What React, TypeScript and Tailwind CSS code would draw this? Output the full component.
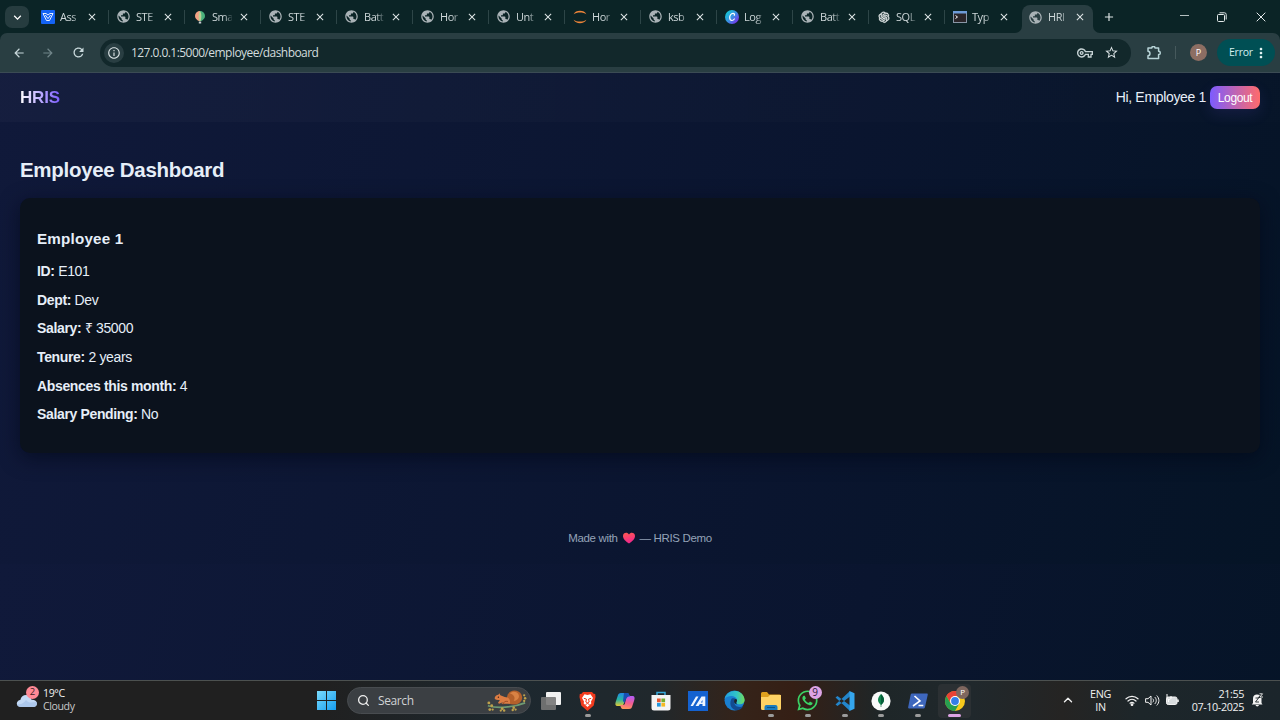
import type { ReactNode } from "react";
import {
  MdPublic,
  MdClose,
  MdArrowBack,
  MdArrowForward,
  MdRefresh,
  MdInfoOutline,
  MdOutlineVpnKey,
  MdStarBorder,
  MdMoreVert,
  MdAdd,
  MdKeyboardArrowDown,
} from "react-icons/md";
import { AiOutlineOpenAI } from "react-icons/ai";
import { FaWhatsapp } from "react-icons/fa";
import { ChevronUp, Search } from "lucide-react";

const Globe = () => <MdPublic className="size-[15px] text-[#a9b2b6]" />;

const ArrowBadge = () => (
  <svg width="14" height="14" viewBox="0 0 14 14">
    <rect width="14" height="14" rx="1" fill="#1463f5" />
    <path d="M2 3.500h3L7 5l2-1.500h3L8.500 10.500H5.500zM4.300 5L7 8.600 9.700 5" fill="none" stroke="#fff" strokeWidth="0.900" />
  </svg>
);
const Balloon = () => (
  <svg width="14" height="14" viewBox="0 0 14 14">
    <path d="M7 1A5 5 0 0 0 2 6c0 2.500 2 4 3.800 5H7z" fill="#f2a184" />
    <path d="M7 1a5 5 0 0 1 5 5c0 2.500-2 4-3.800 5H7z" fill="#49b07b" />
    <path d="M7 1c-1.700 2-1.700 7-.6 10h1.200C8.700 8 8.700 3 7 1z" fill="#b9cf94" />
    <rect x="5.800" y="11.500" width="2.400" height="2" fill="#c7cdd0" />
  </svg>
);
const Jupyter = () => (
  <svg width="14" height="14" viewBox="0 0 14 14">
    <path d="M.6 4.300C2.500-.3 11.500-.3 13.400 4.300 10.300 1.800 3.700 1.800.6 4.300zM.6 9.700c1.900 4.600 10.900 4.600 12.800 0-3.100 2.500-9.700 2.500-12.800 0z" fill="#ee8439" />
  </svg>
);
const Canva = () => (
  <svg width="14" height="14" viewBox="0 0 14 14">
    <defs>
      <linearGradient id="canva" x1="0" y1="0.300" x2="0.800" y2="1">
        <stop offset="0" stopColor="#15c4d4" />
        <stop offset="0.500" stopColor="#3b8de4" />
        <stop offset="1" stopColor="#7b2bea" />
      </linearGradient>
    </defs>
    <circle cx="7" cy="7" r="7" fill="url(#canva)" />
    <path d="M9.300 5.300c.5-1-.1-2-1.300-2C6 3.300 4.600 5.600 4.700 7.800c.1 1.800 1 2.700 2.200 2.700 1 0 1.800-.6 2.400-1.500" fill="none" stroke="#fff" strokeWidth="1.200" strokeLinecap="round" />
  </svg>
);
const TerminalIcon = () => (
  <svg width="14" height="12" viewBox="0 0 14 12">
    <rect x="0.500" y="0.500" width="13" height="11" fill="#2a2529" stroke="#8996a6" />
    <rect width="14" height="2.500" fill="#6d9bd8" />
    <path d="M2.500 4.500l2 1.500-2 1.500" fill="none" stroke="#fff" strokeWidth="1" />
  </svg>
);

const tabs: { title: string; icon: ReactNode }[] = [
  { title: "Ass", icon: <ArrowBadge /> },
  { title: "STE", icon: <Globe /> },
  { title: "Sma", icon: <Balloon /> },
  { title: "STE", icon: <Globe /> },
  { title: "Batt", icon: <Globe /> },
  { title: "Hor", icon: <Globe /> },
  { title: "Unt", icon: <Globe /> },
  { title: "Hor", icon: <Jupyter /> },
  { title: "ksb", icon: <Globe /> },
  { title: "Log", icon: <Canva /> },
  { title: "Batt", icon: <Globe /> },
  { title: "SQL", icon: <AiOutlineOpenAI className="size-[14px] text-[#e8eced]" strokeWidth={25} /> },
  { title: "Typ", icon: <TerminalIcon /> },
];

function TabBody({ title, icon }: { title: string; icon: ReactNode }) {
  return (
    <>
      <span className="flex w-[15px] shrink-0 items-center justify-center">{icon}</span>
      <span className="ml-[5px] w-[20px] shrink-0 pt-px text-[11px] tracking-[-0.45px] whitespace-nowrap text-[#cfd8da] [mask-image:linear-gradient(90deg,#000_60%,rgba(0,0,0,0.15))]">
        {title}
      </span>
      <MdClose className="ml-[6px] size-[12px] shrink-0 text-[#dfe5e6]" />
    </>
  );
}

function TabStrip() {
  return (
    <div className="flex h-[33px] bg-[#0b2426]">
      <div className="mt-[6px] ml-[5px] flex h-[22px] w-[24px] items-center justify-center rounded-[7px] bg-[#263c3f]">
        <MdKeyboardArrowDown className="size-[15px] text-white" />
      </div>
      <div className="ml-[3px] flex">
        {tabs.map((t, i) => (
          <div key={i} className="flex h-[33px] w-[76px] items-center pl-[8px]">
            <TabBody {...t} />
            <span
              className={
                i === tabs.length - 1
                  ? "hidden"
                  : "-mr-px ml-auto h-[14px] w-px bg-[#2d4547]"
              }
            />
          </div>
        ))}
      </div>
      <div className="relative mt-[5px] ml-[2px] flex h-[28px] w-[71px] items-center rounded-t-[8px] bg-[#293e42] pb-[4px] pl-[6px]">
        <svg className="absolute bottom-0 -left-[7px]" width="7" height="7"><path d="M7 0v7H0a7 7 0 0 0 7-7z" fill="#293e42" /></svg>
        <svg className="absolute -right-[7px] bottom-0" width="7" height="7"><path d="M0 0v7h7a7 7 0 0 1-7-7z" fill="#293e42" /></svg>
        <TabBody title="HRI" icon={<Globe />} />
      </div>
      <div className="flex h-[33px] w-[32px] items-center justify-center">
        <MdAdd className="size-[14px] text-[#dfe5e6]" />
      </div>
      <div className="ml-auto flex h-[33px] items-center pr-[14px] text-[#e4eaeb]">
        <svg width="9" height="10" viewBox="0 0 9 10"><path d="M0 3.500h9" stroke="#b5c0c1" /></svg>
        <svg className="ml-[28px]" width="10" height="10" viewBox="0 0 10 10" fill="none" stroke="currentColor">
          <rect x="0.500" y="2.500" width="7" height="7" rx="1" />
          <path d="M2.500.8H7.500Q9.200.8 9.200 2.500V7.500" />
        </svg>
        <svg className="ml-[29px]" width="10" height="10" viewBox="0 0 10 10" stroke="currentColor" strokeWidth="1">
          <path d="M.7.7l8.600 8.600M9.300.7L.7 9.300" />
        </svg>
      </div>
    </div>
  );
}

function Toolbar() {
  return (
    <div className="bg-[#0b2426]">
      <div className="flex h-[40px] items-center rounded-t-[7px] border-b border-[#3b4b54] bg-[#293e42]">
        <MdArrowBack className="ml-[12px] size-[14px] text-[#c8d8db]" />
        <MdArrowForward className="ml-[15px] size-[14px] text-[#71868a]" />
        <MdRefresh className="ml-[16px] size-[15px] text-[#c8d8db]" />
        <div className="ml-[14px] flex h-[28px] w-[1031px] items-center rounded-full bg-[#12282b]">
          <span className="ml-[4px] flex size-[20px] items-center justify-center rounded-full bg-[#293e42]">
            <MdInfoOutline className="size-[14px] text-[#d9e2e4]" />
          </span>
          <span className="ml-[7px] pt-px text-[12px] tracking-[-0.55px] text-[#d3dcdd]">127.0.0.1:5000/employee/dashboard</span>
          <MdOutlineVpnKey className="ml-auto size-[16px] text-[#c5d2d4]" />
          <MdStarBorder className="mr-[12px] ml-[11px] size-[15px] text-[#d9e2e4]" />
        </div>
        <svg className="ml-[16px]" width="16" height="14" viewBox="0 0 16 14">
          <path d="M1 2h3.800a1.600 1.600 0 0 1 3.200 0h3.600v3.300c2.300 0 2.300 3.300 0 3.300v4H1V9.700c2.600-.2 2.600-4.300 0-4.500z" fill="none" stroke="#b7d3d7" strokeWidth="1.500" strokeLinejoin="round" />
        </svg>
        <span className="ml-[12px] h-[13px] w-px bg-[#46595c]" />
        <span className="ml-[14px] flex size-[17px] items-center justify-center rounded-full bg-[#8d6e63] text-[9px] text-white">P</span>
        <div className="ml-[10px] flex h-[27px] w-[58px] items-center rounded-full bg-[#004f54] pl-[12px]">
          <span className="text-[10.5px] tracking-[-0.25px] text-[#d5f0f1]">Error</span>
          <MdMoreVert className="size-[16px] shrink-0 text-[#e6f6f6]" />
        </div>
      </div>
    </div>
  );
}

const details = [
  ["ID:", "E101"],
  ["Dept:", "Dev"],
  ["Salary:", "₹ 35000"],
  ["Tenure:", "2 years"],
  ["Absences this month:", "4"],
  ["Salary Pending:", "No"],
];

function Dashboard() {
  return (
    <div className="flex h-[607px] flex-col bg-[linear-gradient(105deg,#10193a_0%,#0a152f_62%,#051426_100%)] bg-[length:1280px_491px] font-['Liberation_Sans',sans-serif] text-[#e6eef8]">
      <header className="flex h-[49px] items-center justify-between bg-[linear-gradient(90deg,rgba(255,255,255,0.025),rgba(255,255,255,0.003))] px-[20px]">
        <span className="bg-[linear-gradient(90deg,#ffffff,#7c5cff)] bg-clip-text pt-px text-[17px] font-bold tracking-[-0.2px] text-transparent">HRIS</span>
        <div className="flex items-center gap-[4px]">
          <span className="text-[14px] tracking-[-0.33px]">Hi, Employee 1</span>
          <button className="flex h-[23px] w-[50px] items-center justify-center rounded-[7px] bg-[linear-gradient(90deg,#7c5cff,#ff6b6b)] pt-px text-[12px] tracking-[-0.4px] text-white shadow-[0_5px_15px_rgba(124,92,255,0.12)]">
            Logout
          </button>
        </div>
      </header>
      <main className="px-[20px] pt-[36px]">
        <h1 className="text-[20.5px] leading-[23px] font-bold tracking-[-0.3px]">Employee Dashboard</h1>
        <section className="mt-[17px] h-[255px] rounded-[10px] bg-[#0b121d] px-[17px] pt-[32px] shadow-[0_5px_20px_rgba(2,6,23,0.6)]">
          <h3 className="text-[15.2px] leading-[18px] font-bold tracking-[0.2px]">Employee 1</h3>
          <div className="mt-[16px] flex flex-col gap-[13.330px]">
            {details.map(([label, value]) => (
              <p key={label} className="text-[14px] leading-[15.360px] tracking-[-0.35px]">
                <strong>{label}</strong> {value}
              </p>
            ))}
          </div>
        </section>
      </main>
      <footer className="mt-[78px] flex items-center justify-center text-[11.5px] leading-[14px] tracking-[-0.35px] text-[#94a3b8]">
        <span>Made with</span>
        <svg className="mx-[5px]" width="12" height="12" viewBox="0 0 12 12">
          <defs>
            <linearGradient id="heart" x1="0" y1="0" x2="0.300" y2="1">
              <stop offset="0" stopColor="#ff5a50" />
              <stop offset="1" stopColor="#f0288c" />
            </linearGradient>
          </defs>
          <path d="M6 11.600C3 9.500 0 7 0 4 0 .6 4.300-.3 6 2.400 7.700-.3 12 .6 12 4c0 3-3 5.500-6 7.600z" fill="url(#heart)" />
        </svg>
        <span>— HRIS Demo</span>
      </footer>
    </div>
  );
}

function TaskItem({ children, dot = false }: { children: ReactNode; dot?: boolean }) {
  return (
    <div className="relative flex h-[38px] w-[36.660px] items-center justify-center">
      {children}
      {dot && <span className="absolute bottom-[3px] h-[3px] w-[6px] rounded-full bg-[#9b9b9b]" />}
    </div>
  );
}

const Squirrel = () => (
  <svg width="42" height="24" viewBox="0 0 44 24">
    <path d="M2 17c10 3 26 2 39-3" stroke="#6f9a72" strokeWidth="1.800" fill="none" />
    <path d="M24 15c-2-3-3-6-1-10 2-4 7-5 11-3 5 3 5 9 1 12-3 2-7 2-11 1z" fill="#b4602b" />
    <path d="M25 4c3-3 8-2 9 1 2 4-2 7-5 7 2-3 1-6-4-8z" fill="#d98244" />
    <path d="M9 9c.5-2 2-3.500 4-3.500l1-1.500 1 2C18 7 19 8 21 8c3 0 5 3 4 7h-9l2-2-4 2-1.500-1 2-3c-3 0-5-.5-5.500-2z" fill="#dc7c43" />
    <path d="M18 15.500c0-2 2-4 5-3" stroke="#9b4723" strokeWidth="0.900" fill="none" />
    <circle cx="13" cy="8" r="0.700" fill="#251a18" />
    <g fill="#bda14c">
      <circle cx="3" cy="14" r="1.500" /><circle cx="6" cy="17" r="1.500" /><circle cx="4" cy="21" r="1.500" /><circle cx="7" cy="21" r="1.200" />
      <circle cx="17" cy="20" r="1.500" /><circle cx="19" cy="22" r="1.300" /><circle cx="15.500" cy="22" r="1.200" />
      <circle cx="29" cy="19" r="1.400" /><circle cx="28" cy="21.500" r="1.300" /><circle cx="31" cy="21" r="1.200" />
      <circle cx="40" cy="6" r="1.200" /><circle cx="41" cy="9" r="1.300" /><circle cx="40" cy="12" r="1.200" />
    </g>
  </svg>
);

function TaskIcons() {
  return (
    <>
      <TaskItem>
        <svg width="20" height="18" viewBox="0 0 20 18">
          <rect x="5" y="0" width="15" height="13" rx="1" fill="#f1f1f1" />
          <rect x="0" y="5" width="15" height="13" rx="1" fill="#777777" fillOpacity="0.900" />
        </svg>
      </TaskItem>
      <TaskItem dot>
        <svg width="17" height="20" viewBox="0 0 17 20">
          <path d="M4 1h9l1.500 1.700 1.700.3.300 3-1.800 8.500L8.500 20l-6.200-5.500L.5 6l.3-3 1.700-.3z" fill="#f23b1e" />
          <path d="M8.500 4l3-.7L14 7l-2 3.500.3 2-3.800 3.500-3.800-3.500.3-2L3 7l2.500-3.700z" fill="#fff" />
          <path d="M4.800 7.300l2.500.7M12.200 7.300l-2.500.7M7.500 8l-.7 3 1.700.8 1.700-.8-.7-3M6.500 13.500l2-1 2 1" stroke="#f23b1e" fill="none" />
        </svg>
      </TaskItem>
      <TaskItem>
        <svg width="20" height="18" viewBox="0 0 20 18">
          <defs>
            <linearGradient id="copA" x1="0" y1="0" x2="0" y2="1"><stop offset="0" stopColor="#2189e8" /><stop offset="0.500" stopColor="#27b5a2" /><stop offset="1" stopColor="#e6c934" /></linearGradient>
            <linearGradient id="copB" x1="0.500" y1="0" x2="0.300" y2="1"><stop offset="0" stopColor="#b75cf0" /><stop offset="0.500" stopColor="#f15d93" /><stop offset="1" stopColor="#ff9a57" /></linearGradient>
          </defs>
          <path d="M6 1h6c2 0 2 2 3 4h-3c-1 0-2 1-2 2l-1 4c-1 3-2 3-4 3H3c-3 0-3-2-2-5l2-6c.5-1 1-2 3-2z" fill="url(#copA)" />
          <path d="M14 17H8c-2 0-2-2-3-4h3c1 0 2-1 2-2l1-4c1-3 2-3 4-3h2c3 0 3 2 2 5l-2 6c-.5 1-1 2-3 2z" fill="url(#copB)" />
          <path d="M9 1h3c2 0 2 2 3 3.500-2 0-3 .5-4 2.500l-1.500 4L8 9z" fill="#174fb5" />
        </svg>
      </TaskItem>
      <TaskItem>
        <svg width="20" height="20" viewBox="0 0 20 20">
          <path d="M6 5V1.500h8V5" stroke="#38a9da" strokeWidth="1.500" fill="none" />
          <path d="M.5 4h19v13a2.500 2.500 0 0 1-2.500 2.500H3A2.500 2.500 0 0 1 .5 17z" fill="#f4f4f4" />
          <path d="M6 7.500h3.700v3.700H6z" fill="#e8552e" /><path d="M10.400 7.500h3.700v3.700h-3.700z" fill="#74ad2e" />
          <path d="M6 11.900h3.700v3.700H6z" fill="#2297dd" /><path d="M10.400 11.900h3.700v3.700h-3.700z" fill="#f5b922" />
        </svg>
      </TaskItem>
      <TaskItem>
        <svg width="20" height="20" viewBox="0 0 20 20">
          <rect width="20" height="20" fill="#1462d0" />
          <path d="M2.500 15L8 5.500h2.500L5 15zM7.500 15l6-9.500h3.800V15H14.500V9l-4 6zM12 11.500h4v1.500h-5z" fill="#eef5ff" />
        </svg>
      </TaskItem>
      <TaskItem>
        <svg width="21" height="21" viewBox="0 0 21 21">
          <defs>
            <linearGradient id="edge" x1="0" y1="0.500" x2="1" y2="0.500"><stop offset="0" stopColor="#219de0" /><stop offset="0.600" stopColor="#31c5c7" /><stop offset="1" stopColor="#72dc59" /></linearGradient>
          </defs>
          <circle cx="10.500" cy="10.500" r="10" fill="#1a7fd0" />
          <path d="M.5 9C2-.5 18-2.500 20.500 9c.7 4-3 6-7 5-2-.5-1-1.500-.5-3C13.500 6 5 4 .5 9z" fill="url(#edge)" />
          <path d="M7 10c-2 5 1 10 6 10.300 3-.3 5-2 6.500-4.300-4 2-10 1-9-5 0-1.500 1-2 1-2S8 7 7 10z" fill="#124b91" />
          <path d="M10.300 10c1-2 3.200-1 2.700 1-.5 1.500-1.500 2.500.5 3.200-2 0-4-1.200-3.200-4.200z" fill="#1b242b" />
        </svg>
      </TaskItem>
      <TaskItem dot>
        <svg width="20" height="18" viewBox="0 0 20 18">
          <path d="M0 1.500A1.500 1.500 0 0 1 1.500 0H6l2 2.500h10.500A1.500 1.500 0 0 1 20 4v12H0z" fill="#dfa01d" />
          <path d="M0 5h7l2-2h11v13.500a1.500 1.500 0 0 1-1.500 1.500h-17A1.500 1.500 0 0 1 0 16.500z" fill="#ffd264" />
          <path d="M3.500 18v-3A2 2 0 0 1 5.500 13h9a2 2 0 0 1 2 2v3z" fill="#1c7bbd" />
          <path d="M6 15.500h8" stroke="#0b5489" />
        </svg>
      </TaskItem>
      <TaskItem dot>
        <FaWhatsapp className="size-[23px] text-[#3bd366]" />
        <span className="absolute top-[4px] left-[19px] flex size-[13px] items-center justify-center rounded-full bg-[#dda4e5] text-[10px] leading-none text-[#30203a]">9</span>
      </TaskItem>
      <TaskItem dot>
        <svg width="20" height="20" viewBox="0 0 20 20">
          <path d="M.5 6.500L2.500 5 15 14.500V20zM.5 13.500L2.500 15 15 5.500V0z" fill="#2385ca" />
          <path d="M14.500 0L19.500 2.300v15.400L14.500 20z" fill="#35a6ed" />
        </svg>
      </TaskItem>
      <TaskItem dot>
        <svg width="20" height="20" viewBox="0 0 20 20">
          <circle cx="10" cy="10" r="9.600" fill="#fafafa" />
          <path d="M10 3c-4 4-4 8 0 11 4-3 4-7 0-11z" fill="#11844d" />
          <path d="M10 3c4 4 4 8 0 11zM9.700 13h.6v3h-.6z" fill="#075d3a" />
        </svg>
      </TaskItem>
      <TaskItem dot>
        <svg width="20" height="16" viewBox="0 0 20 16">
          <path d="M4 .5h14.500c1 0 1.500.5 1.200 1.400L17 14c-.3 1-.8 1.500-1.800 1.500H1c-.8 0-1-.6-.8-1.400L2.600 2C2.800 1 3.300.5 4 .5z" fill="#3e67bd" />
          <path d="M6.500 3l5.500 5-7 5M10.500 12.500h4.800" fill="none" stroke="#fff" strokeWidth="1.600" />
        </svg>
      </TaskItem>
      <div className="relative ml-[2px] flex h-[34px] w-[33px] items-center justify-center rounded-[4px] bg-[#2b3033]">
        <svg width="20" height="20" viewBox="0 0 20 20">
          <circle cx="10" cy="10" r="10" fill="#f8c91c" />
          <path d="M1.340 5A10 10 0 0 1 18.660 5H10L5.700 12.500z" fill="#e94235" />
          <path d="M1.340 5A10 10 0 0 0 10 20l4.300-7.500H5.700z" fill="#279e50" />
          <circle cx="10" cy="10" r="5" fill="#fff" />
          <circle cx="10" cy="10" r="3.900" fill="#347de8" />
        </svg>
        <span className="absolute top-[2px] left-[18px] flex size-[13px] items-center justify-center rounded-full bg-[#7f675f] text-[8px] leading-none text-white">P</span>
        <span className="absolute bottom-px h-[3px] w-[13px] rounded-full bg-[#dda4e5]" />
      </div>
    </>
  );
}

function Taskbar() {
  return (
    <div className="flex h-[40px] items-center border-t border-[#4c5150] bg-[linear-gradient(90deg,#202020_0%,#202020_25%,#1d282f_40%,#20282c_51%,#352319_58%,#351f15_62%,#1e2628_69%,#20282c_76%,#252423_83%,#1d262a_89%,#1b252b_100%)] text-[#f0f0f0]">
      <div className="flex w-[316px] pb-px pl-[16px]">
        <div className="relative h-[26px] w-[23px]">
          <svg className="mt-[4px]" width="22" height="17" viewBox="0 0 22 17">
            <path d="M5 16C2 16 .8 14.300.8 12.500c0-2 1.500-3.400 3.500-3.600C5 5.500 7.300 4 10 4s5 2 5.500 4.700C18.500 8.500 21 10 21 12.800c0 2-1.500 3.200-3.500 3.200z" fill="#c3d9f5" />
            <path d="M1 13c4 1 7-1 9-4 3 4 7 2 10.700 2 .8 3-1 5-3.200 5H5c-2 0-3.600-1-4-3z" fill="#a4c1e8" opacity="0.700" />
          </svg>
          <span className="absolute -top-px left-[10px] flex size-[13px] items-center justify-center rounded-full bg-[#ff8995] text-[9.5px] leading-none text-[#3c1c22]">2</span>
        </div>
        <div className="ml-[4px] text-[10.600px] leading-[13.500px] tracking-[-0.4px]">
          <p>19°C</p>
          <p className="text-[#c8c8c8]">Cloudy</p>
        </div>
      </div>
      <svg className="ml-[1px] shrink-0" width="19" height="19" viewBox="0 0 19 19">
        <defs>
          <linearGradient id="win" x1="0" y1="0" x2="1" y2="1"><stop offset="0" stopColor="#7adbfc" /><stop offset="1" stopColor="#159df0" /></linearGradient>
        </defs>
        <path d="M0 0h9v9H0zM10 0h9v9h-9zM0 10h9v9H0zM10 10h9v9h-9z" fill="url(#win)" />
      </svg>
      <div className="ml-[11px] flex h-[27px] w-[184px] shrink-0 items-center rounded-full border border-[#484c50] bg-[#3b3f43] pr-[2px] pl-[9px]">
        <Search className="size-[13px] text-[#eeeeee]" strokeWidth={2.400} />
        <span className="ml-[8px] text-[12px] tracking-[-0.400px] text-[#d0d2d3]">Search</span>
        <span className="ml-auto"><Squirrel /></span>
      </div>
      <div className="ml-[2px] flex shrink-0 items-center">
        <TaskIcons />
      </div>
      <div className="ml-auto flex items-center pr-[16px] pb-px text-[10.800px] leading-[13.500px] tracking-[-0.4px]">
        <ChevronUp className="size-[14px]" strokeWidth={2.400} />
        <div className="ml-[14px] w-[23px] text-center"><p>ENG</p><p>IN</p></div>
        <svg className="ml-[13px]" width="14" height="13" viewBox="0 0 14 13" fill="none" stroke="#f2f2f2" strokeWidth="1.200" strokeLinecap="round">
          <path d="M1 4.800C4.400 1.500 9.600 1.500 13 4.800M3 7c2.300-2.100 5.700-2.100 8 0M5 9.200c1.200-1.100 2.800-1.100 4 0" />
          <circle cx="7" cy="10.700" r="0.800" fill="#f2f2f2" />
        </svg>
        <svg className="ml-[6px]" width="15" height="13" viewBox="0 0 15 13" fill="none" stroke="#f2f2f2" strokeWidth="1" strokeLinecap="round" strokeLinejoin="round">
          <path d="M1 4.700h2L6 2v9L3 8.300H1zM8 5c.8.900.8 2.100 0 3M10 3.300c1.800 1.800 1.800 4.600 0 6.400M12 1.800c2.600 2.600 2.600 6.800 0 9.400" />
        </svg>
        <svg className="ml-[5px]" width="14" height="12" viewBox="0 0 14 12">
          <rect x="1.500" y="3" width="10.500" height="7.500" rx="1.700" fill="#d8dcde" stroke="#f2f2f2" />
          <path d="M13 5.500v2.500" stroke="#fff" strokeWidth="1.500" />
          <path d="M2 0v4c0 2 4 2 4 0V2M3.500 5v3" stroke="#fff" strokeWidth="1" fill="none" />
        </svg>
        <div className="ml-[11px] w-[54px] text-right whitespace-nowrap"><p>21:55</p><p>07-10-2025</p></div>
        <svg className="ml-[7px]" width="13" height="14" viewBox="0 0 13 14">
          <path d="M2 10V5.500C2 3 3.600 1.500 6 1.500s4.500 1.500 4.500 4V10l1 1.500H.8zM4.500 12h3.500a1.800 1.800 0 0 1-3.500 0z" fill="#f2f2f2" />
          <path d="M4.500 5h3L4.500 9H8" stroke="#20282c" strokeWidth="0.900" fill="none" />
          <path d="M8.500.8h3L9 4h3" stroke="#20282c" strokeWidth="2.200" fill="none" />
          <path d="M8.500.8h3L9 4h3" stroke="#f2f2f2" strokeWidth="0.900" fill="none" />
        </svg>
      </div>
    </div>
  );
}

export default function App() {
  return (
    <div className="flex h-[720px] w-[1280px] flex-col overflow-hidden bg-[#0b2426] font-['Open_Sans','Noto_Sans',sans-serif]">
      <TabStrip />
      <Toolbar />
      <Dashboard />
      <Taskbar />
    </div>
  );
}
